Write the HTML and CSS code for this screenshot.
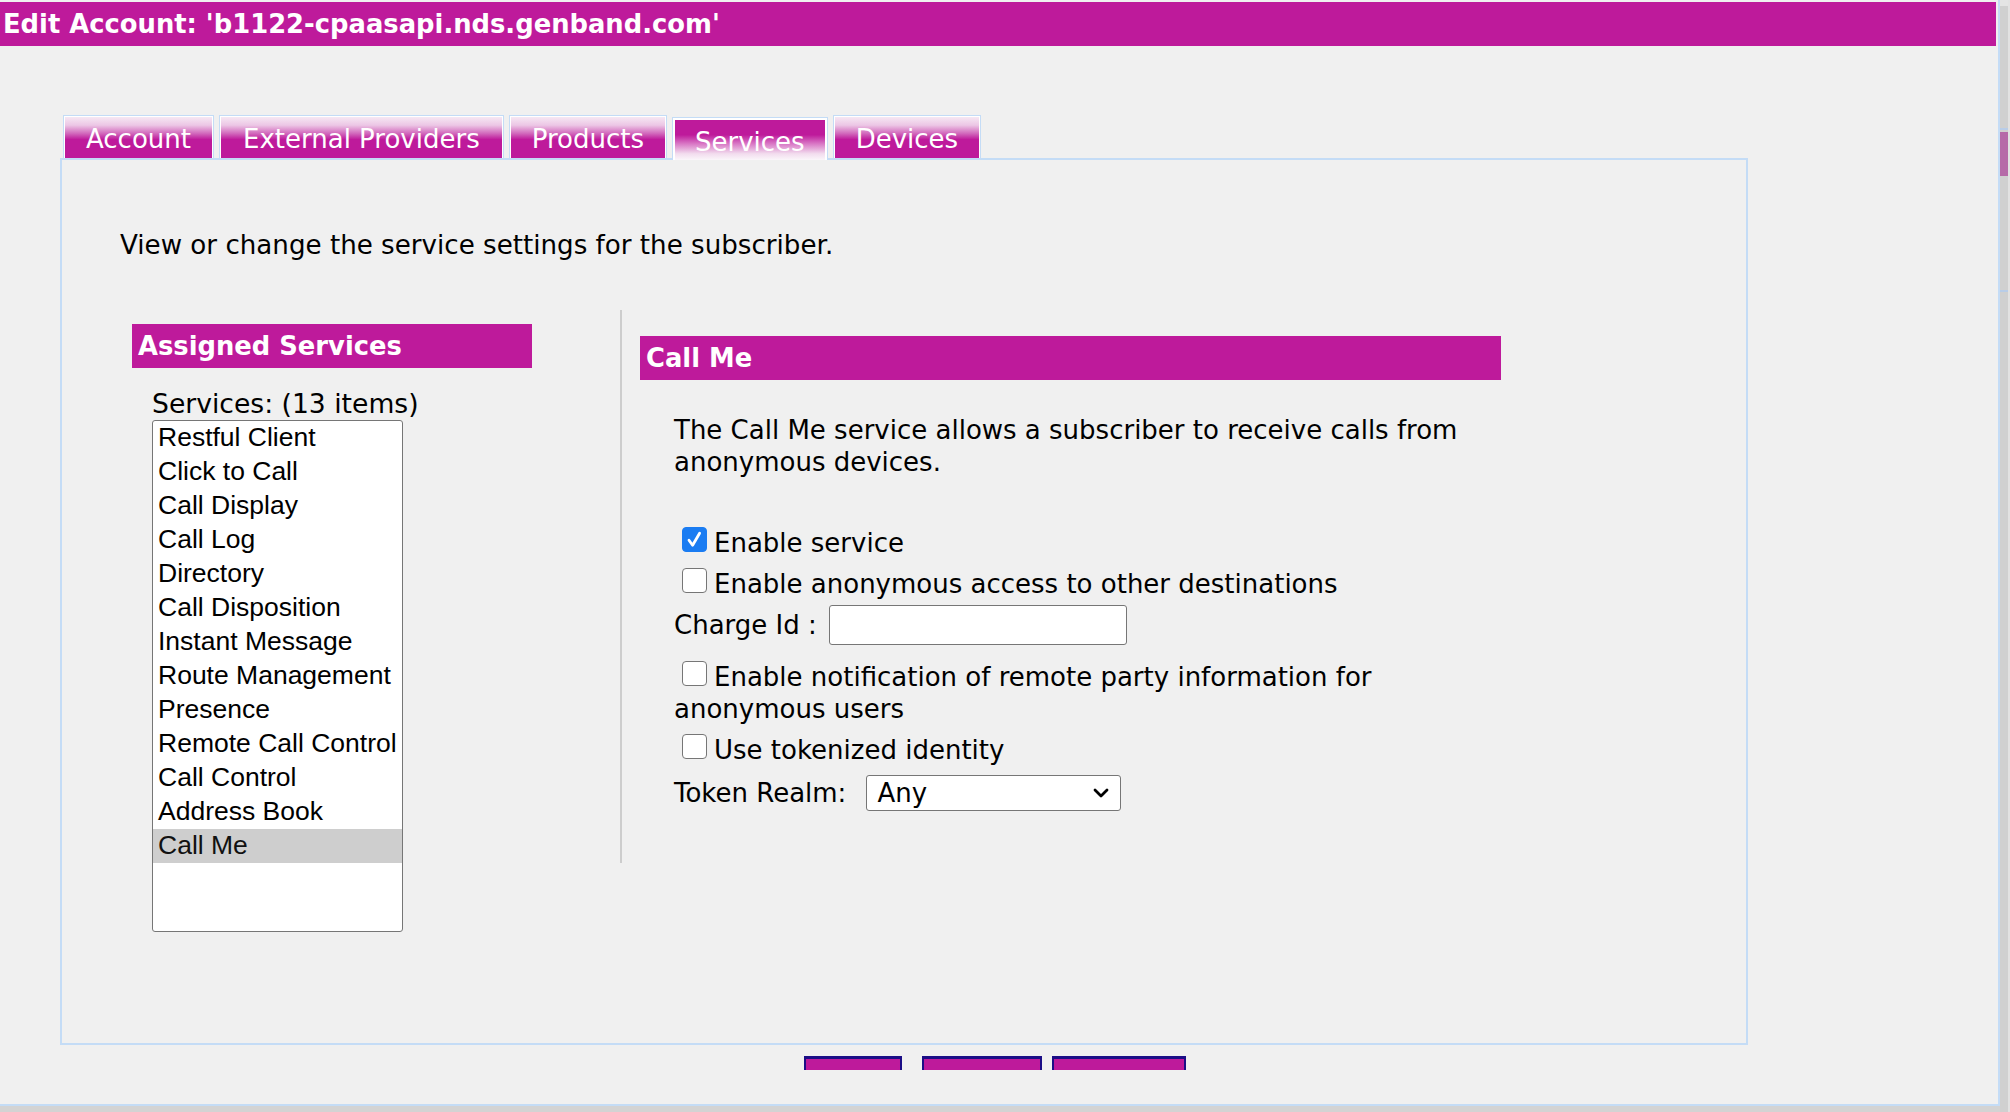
FILE: index.html
```html
<!DOCTYPE html>
<html lang="en">
<head>
<meta charset="utf-8">
<title>Edit Account</title>
<link rel="stylesheet" href="styles.css">
</head>
<body>
<div class="page">
  <div class="frame">
    <div class="titlebar">Edit Account: 'b1122-cpaasapi.nds.genband.com'</div>

    <div class="tabs">
      <div class="tab">Account</div>
      <div class="tab tab-wide">External Providers</div>
      <div class="tab">Products</div>
      <div class="tab active">Services</div>
      <div class="tab">Devices</div>
    </div>

    <div class="panel">
      <p class="intro">View or change the service settings for the subscriber.</p>

      <div class="columns">
        <div class="col-left">
          <div class="section-title assigned">Assigned Services</div>
          <div class="list-label">Services: (13 items)</div>
          <div class="listbox">
            <div class="option">Restful Client</div>
            <div class="option">Click to Call</div>
            <div class="option">Call Display</div>
            <div class="option">Call Log</div>
            <div class="option">Directory</div>
            <div class="option">Call Disposition</div>
            <div class="option">Instant Message</div>
            <div class="option">Route Management</div>
            <div class="option">Presence</div>
            <div class="option">Remote Call Control</div>
            <div class="option">Call Control</div>
            <div class="option">Address Book</div>
            <div class="option selected">Call Me</div>
          </div>
        </div>

        <div class="col-right">
          <div class="section-title service">Call Me</div>
          <div class="service-body">
            <p class="desc">The Call Me service allows a subscriber to receive calls from anonymous devices.</p>

            <div class="opt opt-first"><span class="cb checked"><svg viewBox="0 0 25 25" width="25" height="25"><path d="M7 13.2 L10.6 18.2 L17.6 6.2" fill="none" stroke="#fff" stroke-width="2.8" stroke-linecap="round" stroke-linejoin="round"/></svg></span>Enable service</div>
            <div class="opt"><span class="cb"></span>Enable anonymous access to other destinations</div>

            <div class="field-row charge-row">
              <span class="field-label">Charge Id :</span>
              <span class="textbox"></span>
            </div>

            <div class="opt opt-notify"><span class="cb"></span>Enable notification of remote party information for anonymous users</div>
            <div class="opt"><span class="cb"></span>Use tokenized identity</div>

            <div class="field-row realm-row">
              <span class="field-label">Token Realm:</span>
              <span class="selectbox"><span class="select-value">Any</span><svg class="chevron" viewBox="0 0 16 10" width="16" height="10"><path d="M2 2 L8 8 L14 2" fill="none" stroke="#000" stroke-width="2.8" stroke-linecap="round" stroke-linejoin="round"/></svg></span>
            </div>
          </div>
        </div>
      </div>
    </div>

    <div class="buttons">
      <span class="btn btn-1"></span>
      <span class="btn btn-2"></span>
      <span class="btn btn-3"></span>
    </div>
  </div>

  <div class="scrollbar">
    <div class="sb-top"></div>
    <div class="sb-track sb-track-1"></div>
    <div class="sb-line"></div>
    <div class="sb-track sb-track-gap"></div>
    <div class="sb-thumb"></div>
    <div class="sb-track sb-track-2"></div>
    <div class="sb-line"></div>
    <div class="sb-track sb-track-rest"></div>
  </div>
</div>
</body>
</html>
```

FILE: styles.css
```css
* {
  box-sizing: border-box;
}

html,
body {
  margin: 0;
  padding: 0;
}

body {
  width: 2010px;
  height: 1112px;
  overflow: hidden;
  background: #d3d3d3;
  font-family: "DejaVu Sans", Verdana, sans-serif;
  font-size: 26px;
  color: #000;
}

.page {
  display: flex;
  align-items: flex-start;
}

.frame {
  width: 2000px;
  height: 1106px;
  padding-top: 2px;
  background: #f0f0f0;
  border-right: 2px solid #c4dcf6;
  border-bottom: 2px solid #c4dcf6;
}

/* ---------- title ---------- */
.titlebar {
  width: 1996px;
  height: 44px;
  line-height: 44px;
  padding-left: 3px;
  background: #be1a9b;
  color: #fff;
  font-weight: bold;
  font-size: 25.8px;
  white-space: nowrap;
}

/* ---------- tabs ---------- */
.tabs {
  position: relative;
  z-index: 1;
  display: flex;
  align-items: flex-end;
  gap: 5px;
  height: 43px;
  margin-top: 69px;
  padding-left: 63px;
}

.tab {
  height: 43px;
  padding: 0 22px;
  border: 1px solid #c4dcf6;
  border-bottom: 0;
  box-shadow: inset 1px 1px 0 #fff, inset -1px 0 0 #fff;
  background: linear-gradient(to bottom, #f7ecf5 0%, #ecc6e5 22%, #d166bb 42%, #be1a9b 56%, #be1a9b 100%);
  color: #fff;
  font-size: 26px;
  line-height: 46px;
  white-space: nowrap;
}

.tab-wide {
  padding: 0 23px;
}

.tab.active {
  margin-bottom: -2px;
  padding: 1px 22px 0;
  box-shadow: inset 2px 2px 0 #fff, inset -2px 0 0 #fff;
  background: linear-gradient(to bottom, #be1a9b 0%, #be1a9b 40%, #d772c3 60%, #f2dcee 85%, #fbf6fa 100%);
}

/* ---------- main panel ---------- */
.panel {
  width: 1688px;
  height: 887px;
  margin-left: 60px;
  border: 2px solid #c4dcf6;
}

.intro {
  margin: 69px 0 0 0;
  padding-left: 58px;
  line-height: 32px;
  font-size: 26.15px;
}

.columns {
  display: flex;
  align-items: flex-start;
  margin: 49px 0 0 70px;
}

.col-left {
  width: 488px;
  padding-top: 14px;
}

.section-title {
  height: 44px;
  line-height: 44px;
  background: #be1a9b;
  color: #fff;
  font-weight: bold;
  font-size: 25.8px;
  white-space: nowrap;
}

.section-title.assigned {
  width: 400px;
  padding-left: 6px;
}

.section-title.service {
  width: 861px;
  padding-left: 6px;
}

.list-label {
  margin: 20px 0 0 20px;
  line-height: 32px;
  font-size: 26.6px;
}

.listbox {
  width: 251px;
  height: 512px;
  margin-left: 20px;
  background: #fff;
  border: 1px solid #767676;
  border-radius: 3px;
  overflow: hidden;
  font-family: "Liberation Sans", Arial, sans-serif;
  font-size: 26.5px;
}

.option {
  height: 34px;
  line-height: 33px;
  padding-left: 5px;
  white-space: nowrap;
}

.option.selected {
  background: #cecece;
  color: #111;
}

.col-right {
  height: 553px;
  padding: 26px 0 0 18px;
  border-left: 2px solid #cdcdcd;
}

.service-body {
  width: 861px;
  padding-left: 34px;
}

.desc {
  margin: 34px 0 0 0;
  line-height: 32px;
  width: 800px;
}

.opt {
  line-height: 32px;
  margin-top: 9px;
}

.opt-first {
  margin-top: 49px;
}

.opt-notify {
  margin-top: 16px;
}

.cb {
  display: inline-block;
  width: 25px;
  height: 25px;
  margin: 0 7px 0 8px;
  border: 1.5px solid #767676;
  border-radius: 4px;
  background: #fff;
  vertical-align: baseline;
}

.cb svg {
  display: block;
  margin: -1.5px;
}

.cb.checked {
  border-color: #1a7cf2;
  background: #1a7cf2;
}

.field-row {
  display: flex;
  align-items: center;
}

.charge-row {
  height: 40px;
  margin-top: 5px;
}

.realm-row {
  height: 36px;
  margin-top: 9px;
}

.textbox {
  display: block;
  width: 298px;
  height: 40px;
  margin-left: 12px;
  background: #fff;
  border: 1px solid #767676;
  border-radius: 3px;
}

.selectbox {
  display: flex;
  align-items: center;
  justify-content: space-between;
  width: 255px;
  height: 36px;
  margin-left: 20px;
  padding: 0 11px 0 10px;
  background: #fff;
  border: 1px solid #767676;
  border-radius: 3px;
}

.select-value {
  line-height: 34px;
}

.chevron {
  display: block;
}

/* ---------- bottom buttons ---------- */
.buttons {
  display: flex;
  height: 14px;
  margin-top: 11px;
  padding-left: 804px;
}

.btn {
  display: block;
  height: 14px;
  background: #be1a9b;
  border: 2px solid #1b0e86;
  border-top-width: 3px;
  border-bottom: 0;
}

.btn-1 {
  width: 98px;
  margin-right: 20px;
}

.btn-2 {
  width: 120px;
  margin-right: 10px;
}

.btn-3 {
  width: 134px;
}

/* ---------- scrollbar ---------- */
.scrollbar {
  display: flex;
  flex-direction: column;
  width: 10px;
  height: 1112px;
  border-right: 2px solid #e2e2e2;
}

.sb-top {
  height: 6px;
  background: #e4e4e4;
}

.sb-track {
  background: #d0d0d0;
}

.sb-track-1 {
  height: 122px;
}

.sb-track-gap {
  height: 2px;
}

.sb-line {
  height: 2px;
  background: #b9cde8;
}

.sb-thumb {
  height: 44px;
  background: #b66aa8;
}

.sb-track-2 {
  height: 114px;
}

.sb-track-rest {
  flex: 1;
}
```
